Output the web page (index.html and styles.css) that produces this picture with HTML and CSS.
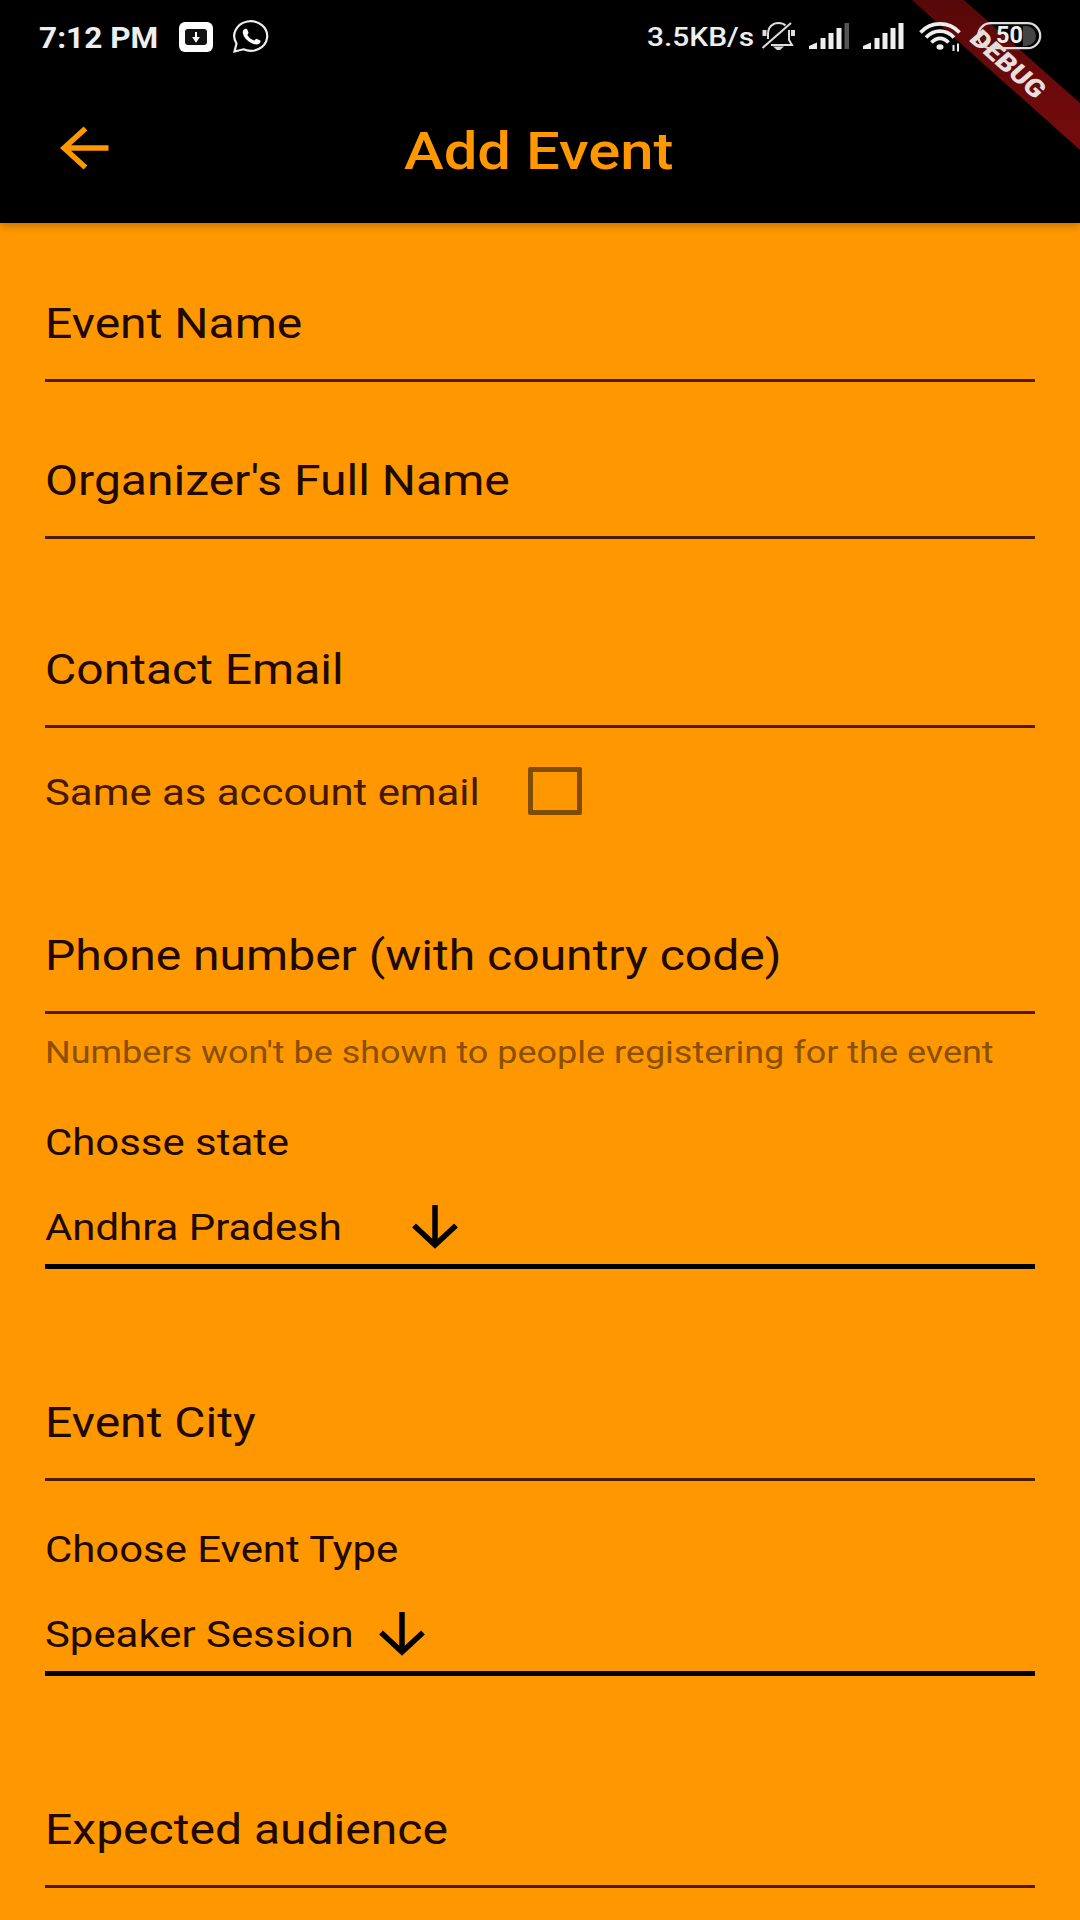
FILE: index.html
```
<!DOCTYPE html>
<html lang="en">
<head>
    <meta charset="UTF-8">
    <title>Add Event</title>
    <link rel="stylesheet" href="styles.css">
</head>
<body>
    <div class="screen">
        <header class="header">
            <div class="status-bar">
                <span class="wide time">7:12 PM</span>
                <svg class="icon-app" width="34" height="30" viewBox="0 0 34 30">
                    <rect width="34" height="30" rx="6" fill="#fff"/>
                    <rect x="6" y="7" width="22" height="16" rx="3" fill="#111"/>
                    <path d="M17 10v6M15 16h4L17 19z" stroke="#fff" stroke-width="2" fill="#fff"/>
                </svg>
                <svg class="icon-chat" width="37" height="33" viewBox="0 0 37 33">
                    <path d="M1.500 31.500 L3.500 23.500 A16.500 14.800 0 1 1 10.500 29.300 Z" fill="none" stroke="#eee" stroke-width="2.200"/>
                    <path d="M11 9.500c1.500-1.200 3-.8 3.500.5l1 2.500c.2 1-1.500 1.800-1 2.800 1.500 2.500 3.800 4.200 6.500 5.200 1 .2 1.800-2 3-1.600l3.200 1.600c1 .6 0 2.800-1.500 3.500-3 1.500-8.500-.8-12-4.200C10 16.200 8.500 11.500 11 9.500z" fill="#fff"/>
                </svg>
                <span class="wide speed">3.5KB/s</span>
                <svg class="icon-bell" width="35" height="30" viewBox="0 0 35 30" fill="none" stroke="#ddd" stroke-width="2">
                    <path d="M7 18V13C7 5.500 12 2 17.500 2c3 0 5.500 1 7 2.500M28 9v10l3 5H10"/>
                    <path d="M1.500 27 30 2"/>
                    <path d="M3.500 9v6M32 9v6" stroke-width="4"/>
                    <path d="M12 25.500h11l-4 3.500h-3z" fill="#ddd" stroke="none"/>
                </svg>
                <svg class="icon-signal" width="41" height="27" viewBox="0 0 41 27" fill="#eee">
                    <path d="M0 26v-3l8-3.500V26zM11.500 15h5v11h-5zM19.500 10h5v16h-5zM27.500 5h5v21h-5z"/>
                    <path d="M35.500 0h4.500v26h-4.500z" fill="#555"/>
                </svg>
                <svg class="icon-signal-2" width="41" height="27" viewBox="0 0 41 27" fill="#eee">
                    <path d="M0 26v-3l8-3.500V26zM11.500 15h5v11h-5zM19.500 10h5v16h-5zM27.500 5h5v21h-5zM35.500 0h5v26h-5z"/>
                </svg>
                <svg class="icon-wifi" width="43" height="31" viewBox="0 0 43 31" fill="none" stroke="#eee" stroke-width="3.600">
                    <path d="M1.500 10.500C12-1 30-1 40.500 10.500M7 15.500c8-8.500 20-8.500 28 0M12.500 20.500c5-5.500 12-5.500 17 0"/>
                    <ellipse cx="21" cy="25" rx="3.500" ry="2.800" fill="#eee" stroke="none"/>
                    <path d="M34.500 23v6M39 21.500v8" stroke-width="2"/>
                </svg>
                <svg class="icon-battery" width="65" height="28" viewBox="0 0 65 28">
                    <path d="M46 4h3a10 10 0 0 1 0 20h-3z" fill="#444"/>
                    <rect x="1.200" y="1.200" width="62" height="25" rx="12.500" fill="none" stroke="#ddd" stroke-width="2.200"/>
                    <text class="battery-text" x="19" y="21" textLength="27" lengthAdjust="spacingAndGlyphs">50</text>
                </svg>
            </div>
            <div class="app-bar">
                <svg class="back" width="50" height="44" viewBox="0 0 50 44" fill="none" stroke="#ff9800" stroke-width="5.500">
                    <path d="M48.500 22H5M25.500 2.500 4 22l21.500 19.500"/>
                </svg>
                <h1 class="wide title">Add Event</h1>
            </div>
        </header>

        <svg class="banner" width="180" height="160" viewBox="900 0 180 160">
            <defs>
                <linearGradient id="banner-fill" x1="0" y1="0" x2="0" y2="1">
                    <stop offset="0" stop-color="#570808"/>
                    <stop offset="0.550" stop-color="#6b0a0b"/>
                    <stop offset="1" stop-color="#740b0c"/>
                </linearGradient>
            </defs>
            <path d="M912 0H964L1080 103V150z" fill="url(#banner-fill)"/>
            <text class="banner-text" transform="translate(968 40) scale(1 0.890) rotate(45)" textLength="95" lengthAdjust="spacingAndGlyphs">DEBUG</text>
        </svg>

        <main class="form">
            <div class="field">
                <label class="wide">Event Name</label>
            </div>
            <div class="field organizer">
                <label class="wide">Organizer's Full Name</label>
            </div>
            <div class="field email">
                <label class="wide">Contact Email</label>
            </div>
            <div class="check-row">
                <span class="wide small">Same as account email</span>
                <div class="checkbox"></div>
            </div>
            <div class="field phone">
                <label class="wide">Phone number (with country code)</label>
            </div>
            <div class="helper"><span class="wide">Numbers won't be shown to people registering for the event</span></div>

            <div class="caption state"><span class="wide">Chosse state</span></div>
            <div class="select state-select">
                <span class="wide">Andhra Pradesh</span>
                <svg width="46" height="44" viewBox="0 0 46 44" fill="none" stroke="#000" stroke-width="5.500">
                    <path d="M23 0v38M2 20.500 23 40l21-19.500"/>
                </svg>
            </div>

            <div class="field city">
                <label class="wide">Event City</label>
            </div>

            <div class="caption type"><span class="wide">Choose Event Type</span></div>
            <div class="select type-select">
                <span class="wide">Speaker Session</span>
                <svg width="46" height="44" viewBox="0 0 46 44" fill="none" stroke="#000" stroke-width="5.500">
                    <path d="M23 0v38M2 20.500 23 40l21-19.500"/>
                </svg>
            </div>

            <div class="field audience">
                <label class="wide">Expected audience</label>
            </div>
        </main>
    </div>
</body>
</html>
```
FILE: styles.css
```
body {
    margin: 0;
    font-family: Roboto, "Liberation Sans", sans-serif;
    background-color: #ff9800;
    color: #200900;
}

.screen {
    position: relative;
    width: 1080px;
    height: 1920px;
    overflow: hidden;
}

/* text is drawn slightly wider than tall */
.wide {
    display: block;
    white-space: nowrap;
    transform: scaleX(1.117);
    transform-origin: left center;
}

.header {
    height: 223px;
    background-color: #000;
    box-shadow: 0 2px 9px rgba(0, 0, 0, 0.28);
}

/* system icons stay on top of the debug banner */
.status-bar {
    position: relative;
    z-index: 1;
    display: flex;
    align-items: flex-start;
    height: 75px;
    color: #eee;
    font-weight: 700;
}

.status-bar svg {
    flex: none;
}

.time {
    width: 139px;
    margin: 18px 0 0 39px;
    font-size: 29px;
    line-height: 40px;
    transform: scaleX(1.09);
}

.icon-app {
    margin: 22px 0 0 1px;
}

.icon-chat {
    margin: 20px 0 0 20px;
}

.speed {
    width: 108px;
    margin: 18px 0 0 377px;
    font-size: 26px;
    line-height: 38px;
    font-weight: 500;
    transform: scaleX(1.15);
}

.icon-bell {
    margin: 21px 0 0 6px;
}

.icon-signal {
    margin: 23px 0 0 13px;
}

.icon-signal-2 {
    margin: 23px 0 0 13px;
}

.icon-wifi {
    margin: 22px 0 0 15px;
}

.icon-battery {
    margin: 22px 0 0 15px;
}

.battery-text {
    font-size: 23px;
    font-weight: 700;
    fill: #eee;
}

.app-bar {
    display: flex;
    height: 148px;
}

.back {
    margin: 51px 0 0 60px;
}

.title {
    margin: 47px 0 0 294px;
    font-size: 52px;
    font-weight: 500;
    line-height: 60px;
    color: #ff9800;
    transform: scaleX(1.15);
}

.banner {
    position: absolute;
    top: 0;
    right: 0;
}

.banner-text {
    font-size: 27px;
    font-weight: 900;
    fill: #e8dede;
}

.form {
    padding: 70px 45px 0;
}

.field {
    height: 86px;
    border-bottom: 3px solid #4d1c00;
    font-size: 43px;
    line-height: 60px;
}

.organizer {
    margin-top: 68px;
}

.email {
    margin-top: 100px;
}

.check-row {
    display: flex;
    margin-top: 39px;
    font-size: 37.500px;
    line-height: 50px;
    color: #451800;
}

.small {
    width: 483px;
}

.checkbox {
    box-sizing: border-box;
    width: 54px;
    height: 48px;
    border: 5px solid #804c00;
    border-radius: 2px;
}

.phone {
    margin-top: 108px;
}

.helper {
    margin-top: 18px;
    font-size: 32px;
    line-height: 40px;
    color: #8a4f00;
}

.helper .wide {
    transform: scaleX(1.124);
}

.caption {
    font-size: 37.500px;
    line-height: 46px;
}

.state {
    margin-top: 47px;
}

.select {
    display: flex;
    height: 60px;
    margin-top: 39px;
    border-bottom: 5px solid #000;
    font-size: 37.500px;
    line-height: 46px;
}

.state-select span {
    width: 367px;
}

.select svg {
    margin-top: 1px;
}

.city {
    margin-top: 123px;
}

.type {
    margin-top: 45px;
}

.type-select span {
    width: 334px;
}

.audience {
    margin-top: 123px;
}
```
